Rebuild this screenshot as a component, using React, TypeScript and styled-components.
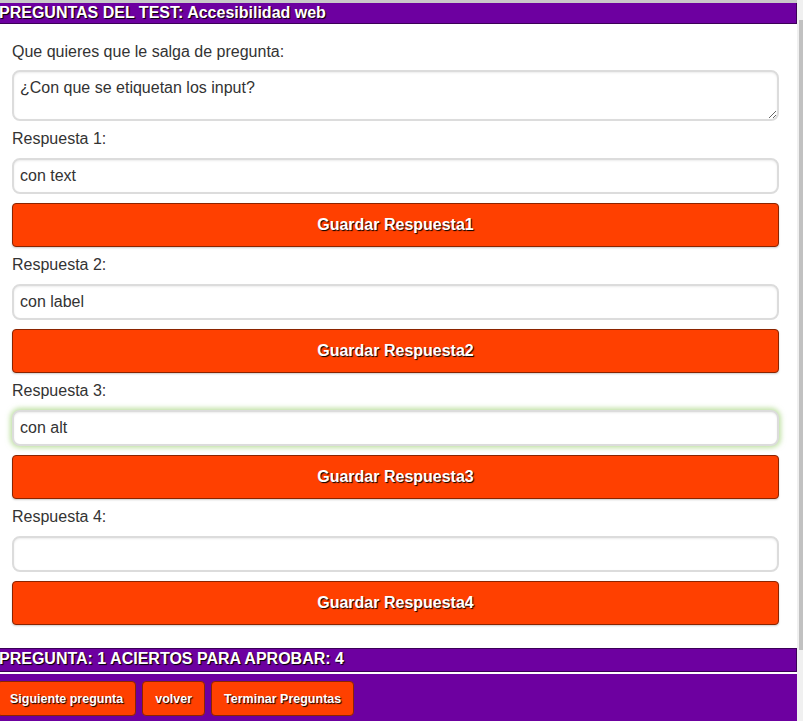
import React from "react";
import styled, { createGlobalStyle } from "styled-components";

const Global = createGlobalStyle`
  html, body { margin: 0; padding: 0; background: #ffffff; }
  body { font-family: "Liberation Sans", Arial, sans-serif; overflow: hidden; }
  * { box-sizing: border-box; }
`;

const Frame = styled.div`
  display: flex;
  width: 803px;
  height: 721px;
  overflow: hidden;
`;

const Main = styled.div`
  width: 797px;
  display: flex;
  flex-direction: column;
  border-top: 3px solid #c9c9c9;
`;

const Bar = styled.div<{ $top?: boolean }>`
  background: #6d00a0;
  color: #ffffff;
  font-weight: bold;
  font-size: 16px;
  line-height: 20px;
  height: ${(p) => (p.$top ? "22px" : "24px")};
  border: 1px solid #3c0058;
  border-left: none;
  ${(p) => (p.$top ? "border-top: none;" : "")}
  text-shadow: 1px 1px 1px #000000;
  white-space: nowrap;
  margin-left: -1px;
`;

const Content = styled.div`
  flex: 1;
  padding: 19px 18px 0 12px;
  display: flex;
  flex-direction: column;
`;

const Label = styled.label<{ $gap: number }>`
  display: block;
  font-size: 16px;
  line-height: 18px;
  color: #333333;
  margin-bottom: ${(p) => p.$gap}px;
`;

const fieldBase = `
  width: 100%;
  font-family: "Liberation Sans", Arial, sans-serif;
  font-size: 16px;
  color: #333333;
  background: #ffffff;
  border: 2px solid #dcdcdc;
  border-radius: 8px;
  box-shadow: inset 0 1px 2px rgba(0,0,0,0.08);
  padding: 0 6px;
  outline: none;
`;

const TextArea = styled.textarea`
  ${fieldBase}
  height: 51px;
  padding-top: 7px;
  resize: vertical;
  margin-bottom: 9px;
  display: block;
`;

const Input = styled.input<{ $focus?: boolean }>`
  ${fieldBase}
  height: 36px;
  margin-bottom: 9px;
  display: block;
  ${(p) =>
    p.$focus
      ? "box-shadow: 0 0 5px 2px rgba(140, 200, 90, 0.55), inset 0 1px 2px rgba(0,0,0,0.08);"
      : ""}
`;

const SaveButton = styled.button`
  width: 100%;
  height: 44px;
  background: #ff4000;
  border: 1px solid #8a2400;
  border-radius: 4px;
  color: #ffffff;
  font-family: "Liberation Sans", Arial, sans-serif;
  font-weight: bold;
  font-size: 16px;
  text-shadow: 1px 1px 1px #000000;
  margin-bottom: 9px;
  box-shadow: 0 1px 2px rgba(0,0,0,0.2);
  cursor: pointer;
`;

const Footer = styled.div`
  margin-top: 14px;
  display: flex;
  flex-direction: column;
  gap: 2px;
  height: 75px;
`;

const Nav = styled.div`
  flex: 1;
  background: #6d00a0;
  display: flex;
  align-items: flex-start;
  gap: 6px;
  padding-top: 7px;
  margin-left: -3px;
`;

const NavButton = styled.button`
  height: 35px;
  background: #ff4000;
  border: 1px solid #8a2400;
  border-radius: 4px;
  color: #ffffff;
  font-family: "Liberation Sans", Arial, sans-serif;
  font-weight: bold;
  font-size: 12.5px;
  text-shadow: 1px 1px 1px #000000;
  padding: 0 12px;
  cursor: pointer;
`;

const Scroll = styled.div`
  width: 6px;
  background: #f0f0f0;
  display: flex;
  flex-direction: column;
  padding: 20px 0 0 2px;
`;

const Thumb = styled.div`
  width: 4px;
  height: 630px;
  background: #c1c1c1;
`;

const answers = [
  { value: "con text", focus: false },
  { value: "con label", focus: false },
  { value: "con alt", focus: true },
  { value: "", focus: false },
];

export default function App() {
  return (
    <>
      <Global />
      <Frame>
        <Main>
          <Bar $top>PREGUNTAS DEL TEST: Accesibilidad web</Bar>
          <Content>
            <Label $gap={9}>Que quieres que le salga de pregunta:</Label>
            <TextArea defaultValue="¿Con que se etiquetan los input?" spellCheck={false} />
            {answers.map((a, i) => (
              <React.Fragment key={i}>
                <Label $gap={10}>Respuesta {i + 1}:</Label>
                <Input $focus={a.focus} defaultValue={a.value} spellCheck={false} />
                <SaveButton>Guardar Respuesta{i + 1}</SaveButton>
              </React.Fragment>
            ))}
          </Content>
          <Footer>
            <Bar>PREGUNTA: 1 ACIERTOS PARA APROBAR: 4</Bar>
            <Nav>
              <NavButton>Siguiente pregunta</NavButton>
              <NavButton>volver</NavButton>
              <NavButton>Terminar Preguntas</NavButton>
            </Nav>
          </Footer>
        </Main>
        <Scroll>
          <Thumb />
        </Scroll>
      </Frame>
    </>
  );
}
